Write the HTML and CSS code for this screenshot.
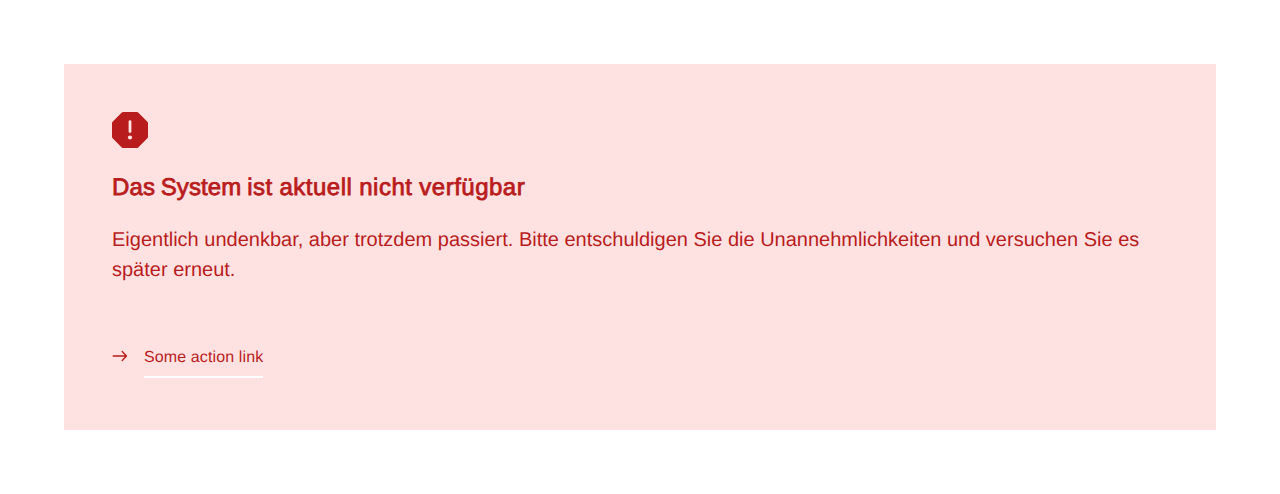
FILE: index.html
```html
<!DOCTYPE html>
<html lang="de">
<head>
<meta charset="utf-8">
<title>Systemfehler</title>
<link rel="stylesheet" href="styles.css">
</head>
<body>
<section class="alert">
  <svg class="alert-icon" viewBox="0 0 36 36" aria-hidden="true">
    <path class="shape" d="M11.200 0h13.600a2 2 0 0 1 1.400.6l9.200 9.200a2 2 0 0 1 .6 1.400v13.600a2 2 0 0 1-.6 1.400l-9.200 9.200a2 2 0 0 1-1.400.6H11.200a2 2 0 0 1-1.400-.6L.6 26.200a2 2 0 0 1-.6-1.400V11.200a2 2 0 0 1 .6-1.400L9.800.6a2 2 0 0 1 1.400-.6z"/>
    <path class="mark" d="M18 9.700v9.900"/>
    <circle class="dot" cx="18" cy="25.500" r="2.100"/>
  </svg>
  <h1 class="alert-title"><span class="title-lead">Das System </span>ist aktuell nicht verfügbar</h1>
  <p class="alert-text">Eigentlich undenkbar, aber trotzdem passiert. Bitte entschuldigen Sie die Unannehmlichkeiten und versuchen Sie es später erneut.</p>
  <a class="alert-link" href="#">
    <svg class="arrow" viewBox="0 0 16 16" aria-hidden="true"><path d="M1.200 8h13.200M10.200 3.500 14.500 8l-4.300 4.500"/></svg>
    <span class="link-label">Some action link</span>
  </a>
</section>
</body>
</html>
```
FILE: styles.css
```css
body { margin: 0; padding: 64px; background: #fff; font-family: "Liberation Sans", Arial, sans-serif; text-rendering: geometricPrecision; }
.alert { box-sizing: border-box; height: 366px; padding: 48px; background: #fee2e2; color: #b91c1c; }
.alert-icon { display: block; width: 36px; height: 36px; }
.shape { fill: #b91c1c; }
.mark { fill: none; stroke: #fee2e2; stroke-width: 2.8; stroke-linecap: round; }
.dot { fill: #fee2e2; }
.alert-title { margin: 25px 0 0; font-size: 24px; font-weight: 400; line-height: 30px; letter-spacing: 0.5px; word-spacing: -0.3px; -webkit-text-stroke: 0.8px currentColor; }
.title-lead { letter-spacing: 0.1px; word-spacing: -1px; }
.alert-text { margin: 22px 0 0; font-size: 20px; line-height: 30px; }
.alert-link { display: inline-flex; gap: 16px; margin-top: 59px; color: inherit; text-decoration: none; }
.arrow { width: 16px; height: 16px; margin-top: 4px; fill: none; stroke: currentColor; stroke-width: 1.4; stroke-linecap: round; stroke-linejoin: round; }
.link-label { box-sizing: border-box; height: 34px; padding-top: 2px; border-bottom: 2px solid #fff; font-size: 16px; line-height: 24px; letter-spacing: 0.12px; }
```
